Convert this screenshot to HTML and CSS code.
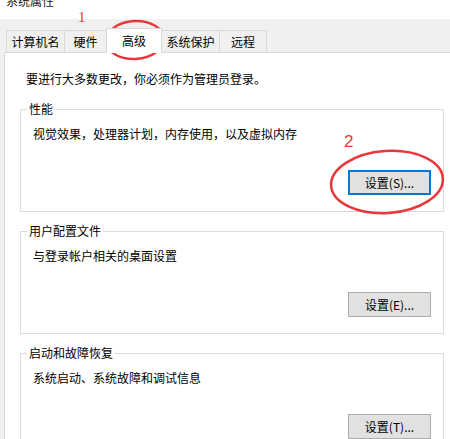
FILE: index.html
```html
<!DOCTYPE html>
<html lang="zh-CN">
<head>
    <meta charset="UTF-8">
    <title>系统属性</title>
    <link rel="stylesheet" href="styles.css">
</head>
<body>
    <div class="titlebar"><span>系统属性</span></div>

    <div class="frame">
        <div class="tabs">
            <div class="tab">计算机名</div>
            <div class="tab">硬件</div>
            <div class="tab active">高级</div>
            <div class="tab">系统保护</div>
            <div class="tab">远程</div>
        </div>

        <div class="panel">
            <p class="note">要进行大多数更改，你必须作为管理员登录。</p>

            <fieldset class="group">
                <legend>性能</legend>
                <p class="desc">视觉效果，处理器计划，内存使用，以及虚拟内存</p>
                <div class="actions"><button class="btn focused">设置(S)...</button></div>
            </fieldset>

            <fieldset class="group">
                <legend>用户配置文件</legend>
                <p class="desc">与登录帐户相关的桌面设置</p>
                <div class="actions"><button class="btn">设置(E)...</button></div>
            </fieldset>

            <fieldset class="group">
                <legend>启动和故障恢复</legend>
                <p class="desc">系统启动、系统故障和调试信息</p>
                <div class="actions"><button class="btn">设置(T)...</button></div>
            </fieldset>
        </div>
    </div>

    <!-- red hand-drawn marks on top of the dialog -->
    <svg class="marks" width="450" height="439" viewBox="0 0 450 439">
        <text class="mark-num one" x="78" y="22">1</text>
        <ellipse cx="135" cy="40" rx="29" ry="19" transform="rotate(-3 135 40)"/>
        <text class="mark-num two" x="344" y="147">2</text>
        <ellipse cx="387" cy="182" rx="56" ry="31" transform="rotate(-4 387 182)"/>
    </svg>
</body>
</html>
```

FILE: styles.css
```css
body {
    margin: 0;
    width: 450px;
    height: 439px;
    overflow: hidden;
    position: relative;
    background-color: white;
    font-family: "Noto Sans CJK SC", "Microsoft YaHei", sans-serif;
    font-size: 12px;
    color: #000;
}

.titlebar {
    height: 19px;
    overflow: hidden;
    background-color: white;
}

.titlebar span {
    display: block;
    margin-top: -5px;
    padding-left: 6px;
    line-height: 12px;
    color: #1a1a1a;
}

.frame {
    background-color: #f0f0f0;
    padding: 11px 0 0 4px;
    height: 420px;
    box-sizing: border-box;
}

.tabs {
    display: flex;
    align-items: flex-end;
    margin-left: 2px;
    height: 22px;
    position: relative;
    z-index: 1;
}

.tab {
    height: 22px;
    line-height: 21px;
    box-sizing: border-box;
    text-align: center;
    border: 1px solid #d9d9d9;
    border-left: none;
    border-bottom: none;
    background-color: #f0f0f0;
}

.tab:nth-child(1) { width: 59px; border-left: 1px solid #d9d9d9; }
.tab:nth-child(2) { width: 42px; }
.tab:nth-child(3) { width: 56px; }
.tab:nth-child(4) { width: 58px; }
.tab:nth-child(5) { width: 47px; }

.tab.active {
    height: 25px;
    line-height: 24px;
    margin-bottom: -1px;
    margin-left: -1px;
    border-left: 1px solid #d9d9d9;
    background-color: white;
}

.panel {
    background-color: white;
    border: 1px solid #d9d9d9;
    border-right: none;
    height: 400px;
    padding: 18px 0 0 15px;
}

.note {
    margin: 0 0 14px 6px;
    line-height: 16px;
}

.group {
    width: 424px;
    box-sizing: border-box;
    margin: 0 0 11px 0;
    padding: 9px 12px 16px 12px;
    border: 1px solid #dcdcdc;
}

.group legend {
    margin-left: -6px;
    padding: 0 2px;
    line-height: 16px;
}

.desc {
    margin: 0;
    line-height: 16px;
}

.actions {
    display: flex;
    justify-content: flex-end;
    margin-top: 28px;
}

.btn {
    width: 83px;
    height: 25px;
    box-sizing: border-box;
    padding: 0;
    font-family: inherit;
    font-size: 12px;
    color: #000;
    background-color: #e1e1e1;
    border: 1px solid #adadad;
}

.btn.focused {
    border: 2px solid #0078d7;
}

.marks {
    position: absolute;
    left: 0;
    top: 0;
    pointer-events: none;
}

.marks ellipse {
    fill: none;
    stroke: #e8383b;
    stroke-width: 2.5;
}

.mark-num {
    fill: #e8383b;
}

.mark-num.one {
    font-family: "Liberation Serif", serif;
    font-size: 15px;
}

.mark-num.two {
    font-family: "Liberation Sans", sans-serif;
    font-size: 17px;
}
```
